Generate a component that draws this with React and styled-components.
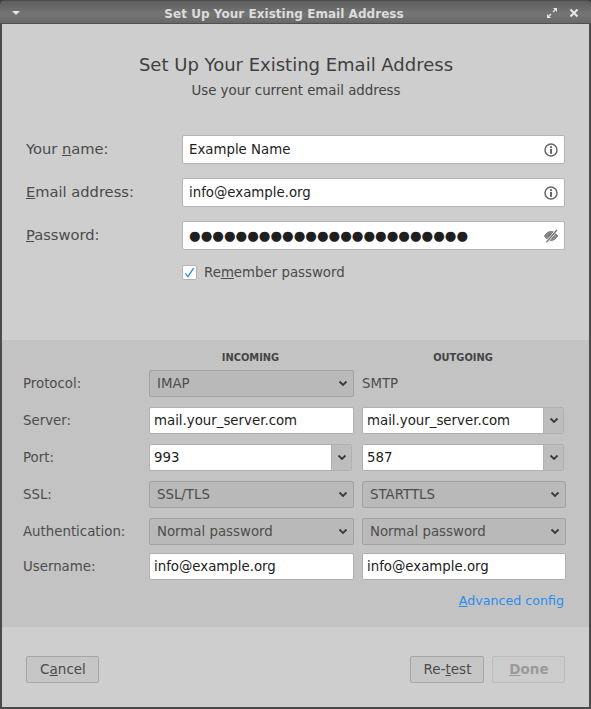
import React from 'react';
import styled, { createGlobalStyle } from 'styled-components';

const Global = createGlobalStyle`
	html, body {
		margin: 0;
		padding: 0;
		background: #3c3c3c;
	}
	* {
		box-sizing: border-box;
	}
`

const Chevron = () => (
	<svg width="10" height="7" viewBox="0 0 10 7">
		<path d="M1.5 1.5 L5 5 L8.5 1.5" fill="none" stroke="#3a3a3a" strokeWidth="1.8" />
	</svg>
)

const InfoIcon = () => (
	<svg width="14" height="14" viewBox="0 0 14 14">
		<circle cx="7" cy="7" r="6" fill="none" stroke="#666" strokeWidth="1.5" />
		<rect x="6" y="6" width="2" height="4.8" fill="#666" />
		<rect x="6" y="3.2" width="2" height="1.9" fill="#666" />
	</svg>
)

const EyeOffIcon = () => (
	<svg width="14" height="14" viewBox="0 0 14 14">
		<path d="M0.5 7 C3 3.2 5 2.6 7 2.6 C9 2.6 11 3.2 13.5 7 C11 10.8 9 11.4 7 11.4 C5 11.4 3 10.8 0.5 7 Z" fill="#8a8a8a" stroke="#707070" strokeWidth="1" />
		<circle cx="7" cy="7" r="2.4" fill="#666" />
		<path d="M2.4 13.4 L12.8 1" stroke="#fff" strokeWidth="2.6" />
		<path d="M2.4 13.4 L12.8 1" stroke="#6e6e6e" strokeWidth="1.3" />
	</svg>
)

const App = () => (
	<>
		<Global />
		<Window>
			<TitleBar>
				<MenuArrow />
				<TitleText>Set Up Your Existing Email Address</TitleText>
				<TitleButtons>
					<svg width="12" height="12" viewBox="0 0 12 12">
						<path d="M7 1 H11 V5 Z M1 7 L5 11 H1 Z" fill="#e8e8e8" />
						<path d="M7 5 L9 3 M3 9 L5 7" stroke="#e8e8e8" strokeWidth="1.3" />
					</svg>
					<svg width="10" height="10" viewBox="0 0 10 10">
						<path d="M1.5 1.5 L8.5 8.5 M8.5 1.5 L1.5 8.5" stroke="#e8e8e8" strokeWidth="2" />
					</svg>
				</TitleButtons>
			</TitleBar>
			<Body>
				<Header>
					<Heading>Set Up Your Existing Email Address</Heading>
					<SubHeading>Use your current email address</SubHeading>
				</Header>
				<AccountForm>
					<BigLabel>Your <u>n</u>ame:</BigLabel>
					<BigField>
						<BigInput readOnly value="Example Name" />
						<InfoIcon />
					</BigField>
					<BigLabel><u>E</u>mail address:</BigLabel>
					<BigField>
						<BigInput readOnly value="info@example.org" />
						<InfoIcon />
					</BigField>
					<BigLabel><u>P</u>assword:</BigLabel>
					<BigField>
						<Dots>{'●'.repeat(24)}</Dots>
						<EyeOffIcon />
					</BigField>
					<span />
					<Remember>
						<CheckBox>
							<svg width="13" height="13" viewBox="0 0 13 13">
								<path d="M2.4 7.4 L5 10.6 L10.6 2.2" fill="none" stroke="#2f8fe8" strokeWidth="1.4" />
							</svg>
						</CheckBox>
						<span>Re<u>m</u>ember password</span>
					</Remember>
				</AccountForm>
				<ServerPanel>
					<ColumnHead $col={2}>INCOMING</ColumnHead>
					<ColumnHead $col={3}>OUTGOING</ColumnHead>

					<SmallLabel>Protocol:</SmallLabel>
					<Select>IMAP<Chevron /></Select>
					<Plain>SMTP</Plain>

					<SmallLabel>Server:</SmallLabel>
					<SmallField><SmallInput readOnly value="mail.your_server.com" /></SmallField>
					<SmallField $combo>
						<SmallInput readOnly value="mail.your_server.com" />
						<Spin><Chevron /></Spin>
					</SmallField>

					<SmallLabel>Port:</SmallLabel>
					<SmallField $combo>
						<SmallInput readOnly value="993" />
						<Spin><Chevron /></Spin>
					</SmallField>
					<SmallField $combo>
						<SmallInput readOnly value="587" />
						<Spin><Chevron /></Spin>
					</SmallField>

					<SmallLabel>SSL:</SmallLabel>
					<Select>SSL/TLS<Chevron /></Select>
					<Select>STARTTLS<Chevron /></Select>

					<SmallLabel>Authentication:</SmallLabel>
					<Select>Normal password<Chevron /></Select>
					<Select>Normal password<Chevron /></Select>

					<SmallLabel $tight>Username:</SmallLabel>
					<SmallField $tight><SmallInput readOnly value="info@example.org" /></SmallField>
					<SmallField $tight><SmallInput readOnly value="info@example.org" /></SmallField>

					<Advanced><AdvancedLink href="#"><u>A</u>dvanced config</AdvancedLink></Advanced>
				</ServerPanel>
				<Footer>
					<Button>C<u>a</u>ncel</Button>
					<RightButtons>
						<Button $wide>Re-<u>t</u>est</Button>
						<Button $disabled disabled><u>D</u>one</Button>
					</RightButtons>
				</Footer>
			</Body>
		</Window>
	</>
)

const Window = styled.div`
	width: 591px;
	height: 709px;
	display: flex;
	flex-direction: column;
	background: #4a4a4a;
	border-radius: 5px 5px 0 0;
	overflow: hidden;
	font-family: "DejaVu Sans", sans-serif;
`
const TitleBar = styled.div`
	height: 24px;
	flex: none;
	display: flex;
	align-items: center;
	justify-content: center;
	position: relative;
	padding: 3px 23px 0 0;
	background: linear-gradient(#5e5e5e, #757575 60%, #686868);
	border-top: 1px solid #4d4d4d;
	border-bottom: 1px solid #505050;
`
const MenuArrow = styled.div`
	position: absolute;
	left: 12px;
	top: 10px;
	width: 0;
	height: 0;
	border-left: 4px solid transparent;
	border-right: 4px solid transparent;
	border-top: 4px solid #e4e4e4;
`
const TitleText = styled.div`
	font-size: 12px;
	font-weight: bold;
	letter-spacing: 0.04px;
	color: #dcdcdc;
`
const TitleButtons = styled.div`
	position: absolute;
	right: 12px;
	top: 6px;
	display: flex;
	align-items: center;
	gap: 11px;
`
const Body = styled.div`
	flex: 1;
	margin: 0 2px 2px 2px;
	display: flex;
	flex-direction: column;
	background: #cecece;
	color: #444;
	font-size: 13.33px;
`
const Header = styled.div`
	height: 111px;
	flex: none;
	padding: 30px 0 0 1px;
	text-align: center;
`
const Heading = styled.div`
	font-size: 18px;
	line-height: 21px;
	color: #3f3f3f;
`
const SubHeading = styled.div`
	margin-top: 7px;
	font-size: 13.33px;
	line-height: 18px;
	color: #444;
`
const AccountForm = styled.div`
	height: 205px;
	flex: none;
	display: grid;
	grid-template-columns: 156px 383px;
	grid-auto-rows: 29px;
	row-gap: 14px;
	padding-left: 24px;
	align-items: center;
`
const BigLabel = styled.div`
	font-size: 14.67px;
	color: #4a4a4a;
	padding-bottom: 2px;
`
const BigField = styled.div`
	height: 29px;
	display: flex;
	align-items: center;
	gap: 6px;
	padding: 0 6px;
	background: #fff;
	border: 1px solid #b4b4b4;
	border-radius: 2px;
`
const BigInput = styled.input`
	flex: 1;
	min-width: 0;
	padding: 0 0 1px;
	border: 0;
	outline: 0;
	background: transparent;
	font: 13.33px "DejaVu Sans", sans-serif;
	color: #222;
`
const Dots = styled.div`
	flex: 1;
	font-size: 13.33px;
	line-height: 27px;
	white-space: nowrap;
	overflow: hidden;
	color: #1f1f1f;
`
const Remember = styled.div`
	display: flex;
	align-items: center;
	gap: 7px;
	margin-top: -13px;
	font-size: 13.33px;
	color: #4a4a4a;
`
const CheckBox = styled.div`
	width: 15px;
	height: 15px;
	display: flex;
	align-items: center;
	justify-content: center;
	background: #fff;
	border: 1px solid #b4b4b4;
	border-radius: 2px;
`
const ServerPanel = styled.div`
	height: 287px;
	flex: none;
	display: grid;
	grid-template-columns: 118px 205px 204px;
	grid-template-rows: 20px;
	grid-auto-rows: 27px;
	column-gap: 8px;
	row-gap: 10px;
	align-content: start;
	padding-left: 21px;
	background: #c3c3c3;
`
const ColumnHead = styled.div`
	grid-column: ${props => props.$col};
	padding: 12px 2px 0 0;
	text-align: center;
	font-size: 9.87px;
	line-height: 12px;
	font-weight: bold;
	color: #444;
`
const SmallLabel = styled.div`
	grid-column: 1;
	display: flex;
	align-items: center;
	font-size: 13.33px;
	color: #4d4d4d;
	margin: ${props => props.$tight ? '-2px 0 2px' : '0'};
`
const Plain = styled.div`
	display: flex;
	align-items: center;
	font-size: 13.33px;
	color: #4d4d4d;
`
const Select = styled.div`
	height: 27px;
	display: flex;
	align-items: center;
	justify-content: space-between;
	padding: 0 5px 0 7px;
	background: #b9b9b9;
	border: 1px solid #a2a2a2;
	border-radius: 2px;
	font-size: 13.33px;
	color: #4d4d4d;
`
const SmallField = styled.div`
	height: 27px;
	display: flex;
	background: #fff;
	border: 1px solid #b0b0b0;
	border-radius: 2px;
	overflow: hidden;
	margin-top: ${props => props.$tight ? '-2px' : '0'};
	margin-right: ${props => props.$combo ? '2px' : '0'};
`
const SmallInput = styled.input`
	flex: 1;
	min-width: 0;
	padding: 0 4px;
	border: 0;
	outline: 0;
	background: transparent;
	font: 13.33px "DejaVu Sans", sans-serif;
	color: #222;
`
const Spin = styled.div`
	flex: none;
	width: 20px;
	display: flex;
	align-items: center;
	justify-content: center;
	background: #bdbdbd;
	border-left: 1px solid #b0b0b0;
`
const Advanced = styled.div`
	grid-column: 2 / 4;
	display: flex;
	justify-content: flex-end;
	align-items: center;
	height: 20px;
	margin-top: -2px;
	padding-right: 2px;
	font-size: 12.65px;
`
const AdvancedLink = styled.a`
	color: #2a8cf0;
	text-decoration: none;
`
const Footer = styled.div`
	flex: 1;
	display: flex;
	justify-content: space-between;
	align-items: flex-start;
	padding: 29px 24px 0 24px;
`
const RightButtons = styled.div`
	display: flex;
	gap: 8px;
`
const Button = styled.button`
	width: ${props => props.$wide ? '74px' : '73px'};
	height: 27px;
	padding: 0 0 2px 1px;
	font: ${props => props.$disabled ? 'bold ' : ''}13.5px "DejaVu Sans", sans-serif;
	color: ${props => props.$disabled ? '#9a9a9a' : '#4a4a4a'};
	background: ${props => props.$disabled ? '#cccccc' : '#c6c6c6'};
	border: 1px solid ${props => props.$disabled ? '#bcbcbc' : '#a6a6a6'};
	border-radius: 2px;
`

export default App
